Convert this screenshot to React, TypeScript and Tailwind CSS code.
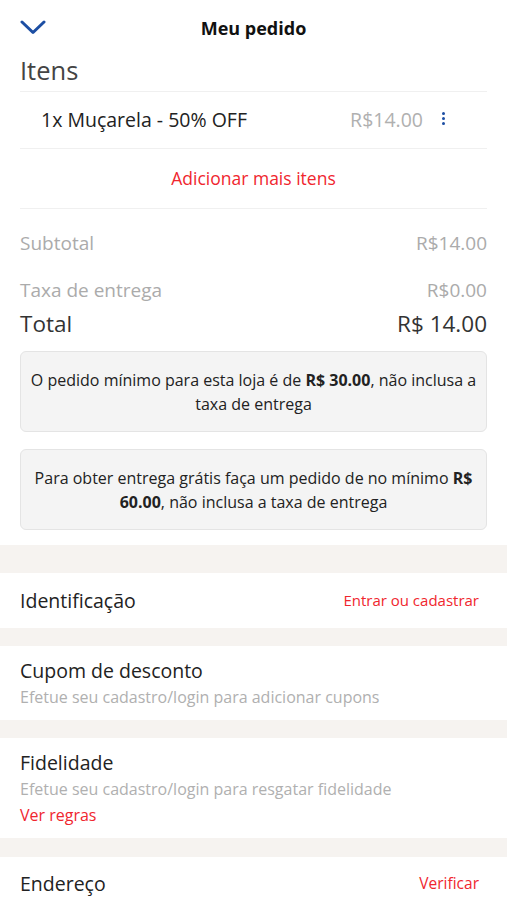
import { ReactNode } from "react";

function Band({ h = "h-[18px]" }: { h?: string }) {
  return <div className={`${h} bg-[#f6f3f0]`} />;
}

function Line() {
  return <div className="mx-5 h-px bg-[#f0f0f0]" />;
}

function InfoBox({ children }: { children: ReactNode }) {
  return (
    <div className="mx-5 flex h-[81px] flex-col items-center justify-center rounded-md border border-[#e4e4e4] bg-[#f4f4f4] text-center text-[16px] leading-[24px] text-[#222]">
      {children}
    </div>
  );
}

export default function App() {
  return (
    <div
      className="h-[900px] w-[507px] overflow-hidden bg-white"
      style={{ fontFamily: "'Open Sans', 'Noto Sans', sans-serif" }}
    >
      {/* Header */}
      <div className="relative flex h-[52px] items-center justify-center">
        <svg
          className="absolute left-[20px] top-[20px]"
          width="26"
          height="15"
          viewBox="0 0 26 15"
          fill="none"
        >
          <polyline
            points="2,2 13,12.5 24,2"
            stroke="#1c4ea3"
            strokeWidth="3"
            strokeLinecap="round"
            strokeLinejoin="round"
          />
        </svg>
        <h1 className="mt-[4px] text-[18px] font-bold text-[#111]">Meu pedido</h1>
      </div>

      {/* Itens */}
      <h2 className="px-5 text-[25.5px] leading-[36px] text-[#444]">Itens</h2>
      <div className="h-[3px]" />
      <Line />
      <div className="flex h-[56px] items-center pl-[41px] pr-[62px]">
        <span className="text-[19.5px] text-[#222]">1x Muçarela - 50% OFF</span>
        <span className="ml-auto text-[19.5px] text-[#b0b0b0]">R$14.00</span>
        <div className="ml-[19px] mb-[4px] flex flex-col gap-[2px]">
          <span className="block h-[3px] w-[3px] rounded-full bg-[#1c4ea3]" />
          <span className="block h-[3px] w-[3px] rounded-full bg-[#1c4ea3]" />
          <span className="block h-[3px] w-[3px] rounded-full bg-[#1c4ea3]" />
        </div>
      </div>
      <Line />
      <div className="flex h-[59px] items-center justify-center text-[17.5px] text-[#f0262e]">
        Adicionar mais itens
      </div>
      <Line />

      {/* Totais */}
      <div className="px-5 pt-[21px]">
        <div className="flex items-center justify-between text-[19px] leading-[26px] text-[#ababab]">
          <span>Subtotal</span>
          <span>R$14.00</span>
        </div>
        <div className="mt-[21px] flex items-center justify-between text-[19px] leading-[26px] text-[#ababab]">
          <span>Taxa de entrega</span>
          <span>R$0.00</span>
        </div>
        <div className="mt-[6px] flex items-center justify-between text-[22.5px] leading-[30px] text-[#333]">
          <span>Total</span>
          <span>R$ 14.00</span>
        </div>
      </div>

      <div className="mt-[12px]" />
      <InfoBox>
        <span className="block">
          O pedido mínimo para esta loja é de <b>R$ 30.00</b>, não inclusa a
        </span>
        <span className="block">taxa de entrega</span>
      </InfoBox>
      <div className="mt-[17px]" />
      <InfoBox>
        <span className="block">
          Para obter entrega grátis faça um pedido de no mínimo <b>R$</b>
        </span>
        <span className="block">
          <b>60.00</b>, não inclusa a taxa de entrega
        </span>
      </InfoBox>

      <div className="mt-[15px]" />
      <Band h="h-[28px]" />

      {/* Identificação */}
      <div className="flex h-[55px] items-center justify-between px-5">
        <span className="text-[19.5px] text-[#222]">Identificação</span>
        <span className="mr-[8px] text-[15px] text-[#f0262e]">Entrar ou cadastrar</span>
      </div>
      <Band />

      {/* Cupom */}
      <div className="flex h-[74px] flex-col justify-center px-5">
        <span className="text-[19.5px] leading-[27px] text-[#222]">Cupom de desconto</span>
        <span className="text-[16px] leading-[26px] text-[#b0b0b0]">
          Efetue seu cadastro/login para adicionar cupons
        </span>
      </div>
      <Band />

      {/* Fidelidade */}
      <div className="flex h-[100px] flex-col justify-center px-5">
        <span className="text-[19.5px] leading-[27px] text-[#222]">Fidelidade</span>
        <span className="text-[16px] leading-[26px] text-[#b0b0b0]">
          Efetue seu cadastro/login para resgatar fidelidade
        </span>
        <span className="text-[16px] leading-[26px] text-[#f0262e]">Ver regras</span>
      </div>
      <Band h="h-[19px]" />

      {/* Endereço */}
      <div className="flex h-[54px] items-center justify-between px-5">
        <span className="text-[19.5px] text-[#222]">Endereço</span>
        <span className="mr-[8px] text-[15.5px] text-[#f0262e]">Verificar</span>
      </div>
    </div>
  );
}
